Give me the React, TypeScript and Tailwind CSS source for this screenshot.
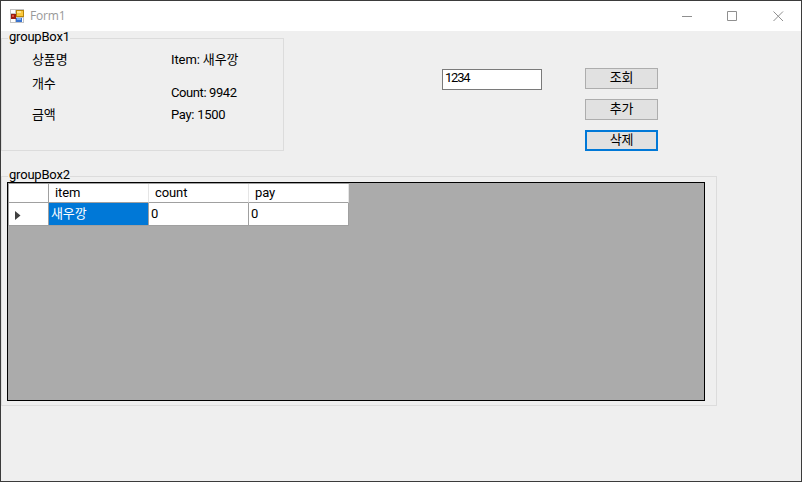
import type { ReactNode } from "react";

const items = [{ item: "새우깡", count: 0, pay: 0 }];

function FormIcon() {
  return (
    <svg width="15" height="15" viewBox="0 0 15 15" shapeRendering="crispEdges">
      <rect x="0" y="0" width="14" height="14" fill="#c4c4c4" />
      <rect x="1" y="1" width="4" height="3" fill="#fff" />
      <rect x="1" y="10" width="4" height="3" fill="#fff" />
      <rect x="12" y="9" width="1" height="4" fill="#fff" />
      <rect x="6" y="1" width="8" height="7" fill="#b8860b" />
      <rect x="7" y="2" width="6" height="5" fill="#fbc93d" />
      <rect x="7" y="2" width="4" height="2" fill="#ffe48c" />
      <rect x="1" y="5" width="5" height="5" fill="#9b1c10" />
      <rect x="2" y="6" width="2" height="2" fill="#e0503c" />
      <rect x="6" y="9" width="6" height="4" fill="#3a74cf" />
      <rect x="7" y="9" width="4" height="2" fill="#7fb0f5" />
    </svg>
  );
}

function TitleBar() {
  return (
    <header className="flex h-[30px] shrink-0 items-center bg-white pl-[9px] pr-[17px]">
      <FormIcon />
      <span className="-mt-px ml-[5px] flex-1 font-['Open_Sans',sans-serif] text-[12px] font-normal leading-[15px] tracking-[-0.15px] text-[#999]">
        Form1
      </span>
      <svg width="102" height="11" viewBox="0 0 102 11" fill="none" stroke="#8f8f8f">
        <path d="M0 5.5H10" />
        <path d="M45.5 .5H54.5V9.5H45.5Z" />
        <path d="M91.5 .5L101 10M101 .5L91.5 10" />
      </svg>
    </header>
  );
}

function GroupBox({ title, className, children }: { title: string; className: string; children: ReactNode }) {
  return (
    <fieldset className={`border border-[#dcdcdc] ${className}`}>
      <legend className="ml-[6px] h-[15px] w-[62px] whitespace-nowrap pl-px leading-[11px] tracking-[-0.2px]">{title}</legend>
      {children}
    </fieldset>
  );
}

function Button({ label, focused = false }: { label: string; focused?: boolean }) {
  return (
    <button
      className={`flex h-[21px] w-[73px] items-center justify-center bg-[#e1e1e1] pb-[2px] ${
        focused ? "border-2 border-[#0078d7]" : "border border-[#adadad]"
      }`}
    >
      {label}
    </button>
  );
}

function HeaderCell({ label }: { label: string }) {
  return <div className="border-b border-r border-b-[#a0a0a0] border-r-[#e5e5e5] bg-white pl-[6px] leading-[17px]">{label}</div>;
}

function DataGrid() {
  return (
    <div className="ml-[5px] h-[219px] w-[698px] border border-black bg-[#ababab]">
      <div className="grid w-[341px] grid-cols-[40px_100px_100px_100px] grid-rows-[19px_23px] border-l border-t border-[#a0a0a0]">
        <div className="border-b border-r border-[#a0a0a0] bg-white" />
        <HeaderCell label="item" />
        <HeaderCell label="count" />
        <HeaderCell label="pay" />
        {items.map((row) => (
          <div key={row.item} className="col-span-4 grid grid-cols-subgrid leading-[21px]">
            <div className="flex items-center border-b border-r border-[#a0a0a0] bg-white pl-[6px] pt-[2px]">
              <svg width="6" height="9" viewBox="0 0 6 9">
                <path d="M0 0L5.5 4.5L0 9Z" fill="#404040" />
              </svg>
            </div>
            <div className="border-b border-r border-[#a0a0a0] bg-[#0078d7] pl-[2px] text-white">{row.item}</div>
            <div className="border-b border-r border-[#a0a0a0] bg-white pl-[2px]">{row.count}</div>
            <div className="border-b border-r border-[#a0a0a0] bg-white pl-[2px]">{row.pay}</div>
          </div>
        ))}
      </div>
    </div>
  );
}

export default function App() {
  return (
    <div className="flex h-[482px] w-[802px] flex-col overflow-hidden border border-[#3b3b3b] bg-[#efefef] font-[Roboto,'Noto_Sans_CJK_KR',sans-serif] text-[13px] font-normal leading-[14px] tracking-[-0.1px] text-black">
      <TitleBar />
      <main className="flex flex-col gap-[18px]">
        <section className="flex">
          <GroupBox title="groupBox1" className="h-[120px] w-[283px]">
            <div className="grid grid-cols-[139px_1fr] pl-[30px] pt-[7px]">
              <div className="flex flex-col">
                <span>상품명</span>
                <span className="mt-[10px]">개수</span>
                <span className="mt-[17px]">금액</span>
              </div>
              <div className="flex flex-col">
                <span>Item: 새우깡</span>
                <span className="mt-[19px] tracking-[-0.4px]">Count: 9942</span>
                <span className="mt-[8px] tracking-[-0.3px]">Pay: 1500</span>
              </div>
            </div>
          </GroupBox>
          <input
            defaultValue="1234"
            className="ml-[158px] mt-[38px] h-[21px] w-[100px] border border-[#7a7a7a] bg-white pb-[4px] pl-[2px] tracking-[-1.2px] outline-none"
          />
          <div className="ml-[43px] mt-[37px] flex flex-col gap-[10px]">
            <Button label="조회" />
            <Button label="추가" />
            <Button label="삭제" focused />
          </div>
        </section>
        <GroupBox title="groupBox2" className="h-[237px] w-[716px]">
          <div className="-mt-[2px]">
            <DataGrid />
          </div>
        </GroupBox>
      </main>
    </div>
  );
}
